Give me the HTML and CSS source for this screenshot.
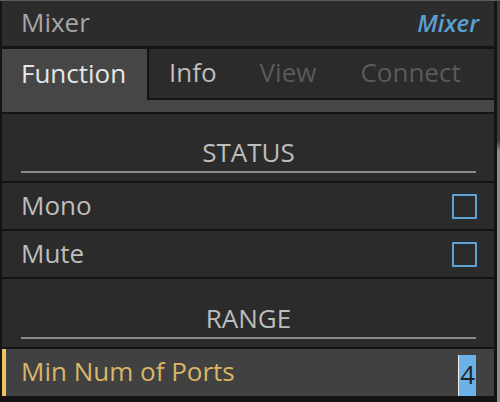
FILE: index.html
```html
<!DOCTYPE html>
<html lang="en">
<head>
  <meta charset="UTF-8">
  <title>Mixer</title>
  <link rel="stylesheet" href="styles.css">
</head>
<body>
  <div class="frame">
    <div class="panel">
      <div class="titlebar">
        <span class="title">Mixer</span>
        <span class="kind">Mixer</span>
      </div>
      <div class="tabs">
        <div class="tab active">Function</div>
        <div class="tab-rest">
          <span class="tab info">Info</span>
          <span class="tab off view">View</span>
          <span class="tab off">Connect</span>
        </div>
      </div>
      <div class="section"><span class="section-name">STATUS</span></div>
      <div class="row">
        <span>Mono</span>
        <span class="check"></span>
      </div>
      <div class="row">
        <span>Mute</span>
        <span class="check"></span>
      </div>
      <div class="section range"><span class="section-name">RANGE</span></div>
      <div class="row selected">
        <span>Min Num of Ports</span>
        <span class="value">4</span>
      </div>
    </div>
    <div class="scroll"></div>
  </div>
</body>
</html>
```
FILE: styles.css
```css
body {
  margin: 0;
  background-color: #141414;
  font-family: "Open Sans", sans-serif;
  font-size: 26px;
}
.frame {
  display: flex;
  height: 402px;
  border-top: 1px solid #5a5a5a;
  box-sizing: border-box;
}
.panel {
  width: 492px;
  margin-left: 2px;
  display: flex;
  flex-direction: column;
  gap: 2px;
  background-color: #141414;
}
.scroll {
  margin-left: 3px;
  width: 3px;
  background: linear-gradient(#3a3a3a 0, #3a3a3a 140px, #8c8c8c 150px);
}
.titlebar {
  height: 45px;
  background-color: #2c2c2c;
  display: flex;
  justify-content: space-between;
  align-items: center;
  padding: 0 15px 3px 19px;
  box-sizing: border-box;
  color: #a6a6a6;
  margin-bottom: 1px;
}
.kind {
  color: #5b9fd0;
  font-style: italic;
  font-weight: 600;
  font-size: 24px;
}
.tabs {
  height: 63px;
  display: flex;
  background-color: #464646;
}
.tab.active {
  width: 126px;
  padding-left: 19px;
  color: #e6e6e6;
  line-height: 48px;
}
.tab-rest {
  flex: 1;
  height: 49px;
  display: flex;
  background-color: #2b2b2b;
  border-left: 2px solid #141414;
  border-bottom: 2px solid #141414;
  line-height: 47px;
}
.tab {
  color: #5a5a5a;
}
.tab.info {
  color: #bdbdbd;
  margin-left: 20px;
  margin-right: 43px;
}
.tab.view {
  margin-right: 44px;
}
.section {
  height: 67px;
  background-color: #2b2b2b;
  display: flex;
  flex-direction: column;
  justify-content: flex-end;
  padding: 0 18px 8px 19px;
  box-sizing: border-box;
}
.section.range {
  height: 68px;
}
.section-name {
  text-align: center;
  color: #bdbdbd;
  line-height: 30px;
  border-bottom: 2px solid #8a8a8a;
  padding-bottom: 4px;
}
.row {
  height: 46px;
  background-color: #2b2b2b;
  display: flex;
  justify-content: space-between;
  align-items: center;
  padding: 0 17px 3px 19px;
  box-sizing: border-box;
  color: #bdbdbd;
}
.check {
  width: 21px;
  height: 21px;
  border: 2px solid #5ba3d9;
  border-radius: 1px;
  margin-top: 3px;
}
.row.selected {
  background-color: #414141;
  color: #d9b665;
  border-left: 4px solid #eebf63;
  padding-left: 15px;
  padding-right: 18px;
  height: 47px;
}
.value {
  align-self: stretch;
  background-color: #6bb2ea;
  color: #222;
  border-left: 1px solid #f0f0f0;
  padding: 0 1px;
  margin-top: 6px;
  margin-bottom: -3px;
  line-height: 38px;
}
```
